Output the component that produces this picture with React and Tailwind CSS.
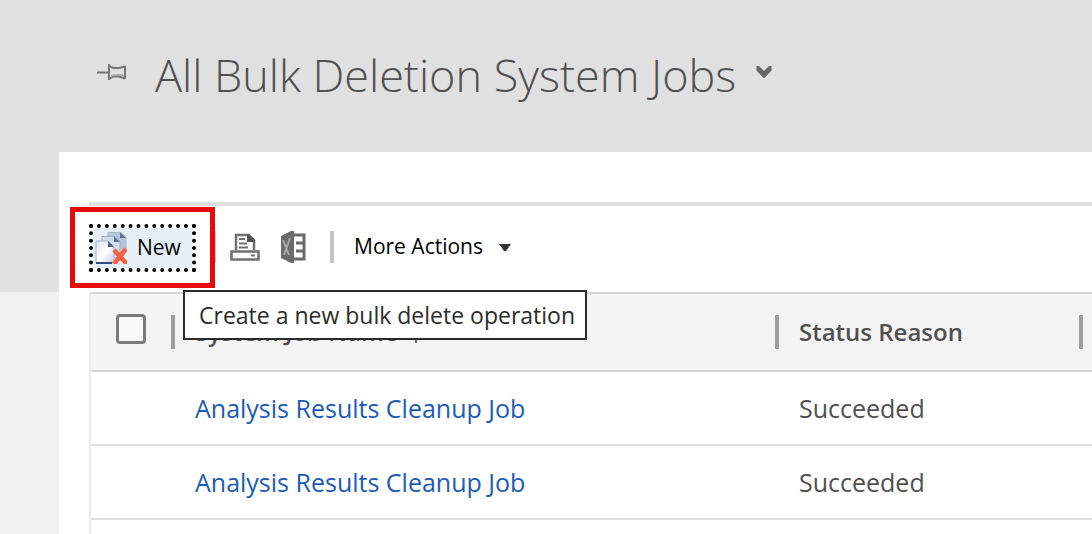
import { useState } from "react";

const jobs = [
  { id: 1, name: "Analysis Results Cleanup Job", status: "Succeeded" },
  { id: 2, name: "Analysis Results Cleanup Job", status: "Succeeded" },
  { id: 3, name: "", status: "" },
];

const PinIcon = () => (
  <svg width="30" height="18" viewBox="0 0 30 18" fill="none" stroke="#757575" strokeWidth="2">
    <path d="M0 9.500H11" />
    <path d="M12 1V17M12 2.500L16 5H22L28 3.500M12 16L16 13.500H22L28 15.500M28 2.500V16" />
    <path d="M14 13L17 12H25L27 13" strokeWidth="1.500" stroke="#a5a5a5" />
  </svg>
);

const ChevronIcon = () => (
  <svg width="16" height="14" viewBox="0 0 16 14" fill="#666">
    <path d="M0.500 1H3L8 6L13 1H15.500V5.500L8.500 13H7.500L0.500 5.500Z" />
  </svg>
);

const BulkDeleteIcon = () => (
  <svg width="32" height="32" viewBox="0 0 32 32">
    <defs>
      <linearGradient id="sheet" x1="0" y1="0" x2="1" y2="1">
        <stop offset="0" stopColor="#dbe3ef" />
        <stop offset="0.5" stopColor="#fff" />
        <stop offset="1" stopColor="#c3cee0" />
      </linearGradient>
    </defs>
    <path d="M13 0.500H26L31 5V20H13Z" fill="#b7c4da" stroke="#a9b8cf" />
    <path d="M25 0.500V6H31Z" fill="#5a6c90" />
    <path d="M7 4.500H20L25 9V26H7Z" fill="#d3dcea" stroke="#9fb0ca" />
    <path d="M19 4.500V10H25Z" fill="#5d6e92" />
    <path d="M1 9H13L19 15V31H1Z" fill="url(#sheet)" stroke="#a5b3ca" />
    <path d="M1 31H17" stroke="#2f4f7c" strokeWidth="2" />
    <path d="M13 9V15H19Z" fill="#4c6088" />
    <path d="M19 18L32 32M31 17L19 32" stroke="#f9603f" strokeWidth="4.500" />
  </svg>
);

const PrintIcon = () => (
  <svg width="30" height="28" viewBox="0 0 30 28" fill="none" stroke="#707070" strokeWidth="2.500">
    <path d="M6 17V2H18L24 7.500V17" />
    <path d="M17 1V9H25V7L19 1Z" fill="#555" stroke="none" />
    <path d="M9 6H15M9 10.500H17M9 14.500H18" strokeWidth="2" />
    <rect x="1.500" y="18.500" width="27" height="8" />
    <path d="M21 22.500H25" strokeWidth="2" />
  </svg>
);

const ExcelIcon = () => (
  <svg width="26" height="32" viewBox="0 0 26 32">
    <path d="M1 5L11 0H14V32H11L1 27Z" fill="#6b6b6b" />
    <path d="M3 9L9 24M10 7L4 24" stroke="#a8a8a8" strokeWidth="2" />
    <path d="M14 4H24V28H14M16 12H24M16 20H24" fill="none" stroke="#6b6b6b" strokeWidth="3" />
  </svg>
);

const CaretIcon = () => (
  <svg width="12" height="7" viewBox="0 0 12 7" fill="#333">
    <path d="M0 0H12L7 7H5Z" />
  </svg>
);

const Separator = () => <span className="h-8 w-1 shrink-0 bg-[#c2c6ca]" />;

const Toolbar = () => (
  <div className="flex h-[90px] items-center border-t-4 border-[#e0e0e0] pb-0.5">
    <div className="relative">
      <button
        type="button"
        aria-describedby="new-tip"
        className="flex h-12 w-[107px] items-center gap-2.5 border-4 border-dotted border-black bg-[#e6eff8] bg-clip-padding pl-0.5 text-[21px] whitespace-nowrap"
      >
        <BulkDeleteIcon />
        New
      </button>
      {/* highlight around the New button */}
      <span className="pointer-events-none absolute -top-[17px] -left-[19px] z-10 h-[81px] w-[145px] border-5 border-[#e90909]" />
      <div
        id="new-tip"
        role="tooltip"
        className="absolute top-[66px] left-[94px] z-20 flex h-[50px] w-[404px] items-center border-2 border-[#2b2b2b] bg-white pl-3.5 text-[23px] whitespace-nowrap text-[#2b2b2b]"
      >
        Create a new bulk delete operation
      </div>
    </div>
    <div className="ml-4 flex items-center pb-0.5">
      <Separator />
      <button type="button" aria-label="Print" className="ml-3.5">
        <PrintIcon />
      </button>
      <button type="button" aria-label="Export to Excel" className="ml-5">
        <ExcelIcon />
      </button>
      <span className="ml-6 flex">
        <Separator />
      </span>
      <button type="button" className="ml-5 flex items-center gap-4 text-[21px] whitespace-nowrap">
        More Actions
        <CaretIcon />
      </button>
    </div>
  </div>
);

const HeaderCell = ({ children }) => (
  <th scope="col" className="p-0 text-left text-2xl font-semibold">
    <div className="flex items-center gap-5">
      <span className="h-[34px] w-1 shrink-0 bg-[#9f9f9f]" />
      {children}
    </div>
  </th>
);

const JobsTable = () => {
  const [allSelected, setAllSelected] = useState(false);

  return (
    <table className="w-full table-fixed border-separate border-spacing-0 border-l-2 border-[#ebebeb] text-[25px] text-[#505050]">
      <colgroup>
        <col className="w-20" />
        <col className="w-[604px]" />
        <col className="w-[304px]" />
        <col />
      </colgroup>
      <thead>
        <tr className="h-20 bg-[#f4f4f4] *:border-y-2 *:border-[#d6d6d6]">
          <th scope="col" className="p-0 pb-1.5">
            <input
              type="checkbox"
              aria-label="Select all jobs"
              checked={allSelected}
              onChange={(e) => setAllSelected(e.target.checked)}
              className="ml-[25px] block size-[30px] appearance-none rounded-[4px] border-3 border-[#7b7b7b] bg-[#f8f8f8] checked:bg-[#7b7b7b]"
            />
          </th>
          <HeaderCell>
            <span>System Job Name</span>
            <svg width="12" height="22" viewBox="0 0 12 22" fill="none" stroke="#777" strokeWidth="2" className="-ml-2">
              <path d="M6 22V1M1 6L6 1L11 6" />
            </svg>
          </HeaderCell>
          <HeaderCell>Status Reason</HeaderCell>
          <HeaderCell />
        </tr>
      </thead>
      <tbody>
        {jobs.map((job) => (
          <tr key={job.id} className="h-[74px] *:border-b-2 *:border-[#e0e0e0]">
            <td />
            <td className="p-0 pt-0.5 pl-6">
              {job.name && (
                <a href="#job" className="text-[#1b5cb8]">
                  {job.name}
                </a>
              )}
            </td>
            <td className="p-0 pt-0.5 pl-6">{job.status}</td>
            <td />
          </tr>
        ))}
      </tbody>
    </table>
  );
};

const App = () => {
  return (
    <div className="h-screen overflow-hidden bg-linear-[#e0e0e0_292px,#f0f0f0_292px] font-['Open_Sans',sans-serif] text-black">
      <header className="flex h-[152px] items-center pb-2 pl-[97px]">
        <PinIcon />
        <h1 className="ml-7 pt-1.5 text-[45px] font-light whitespace-nowrap text-[#505050]">
          All Bulk Deletion System Jobs
        </h1>
        <button type="button" aria-label="Choose view" className="ml-5">
          <ChevronIcon />
        </button>
      </header>
      <main className="ml-[59px] min-h-screen bg-white pt-[50px] pl-[30px]">
        <Toolbar />
        <JobsTable />
      </main>
    </div>
  );
};

export default App;
